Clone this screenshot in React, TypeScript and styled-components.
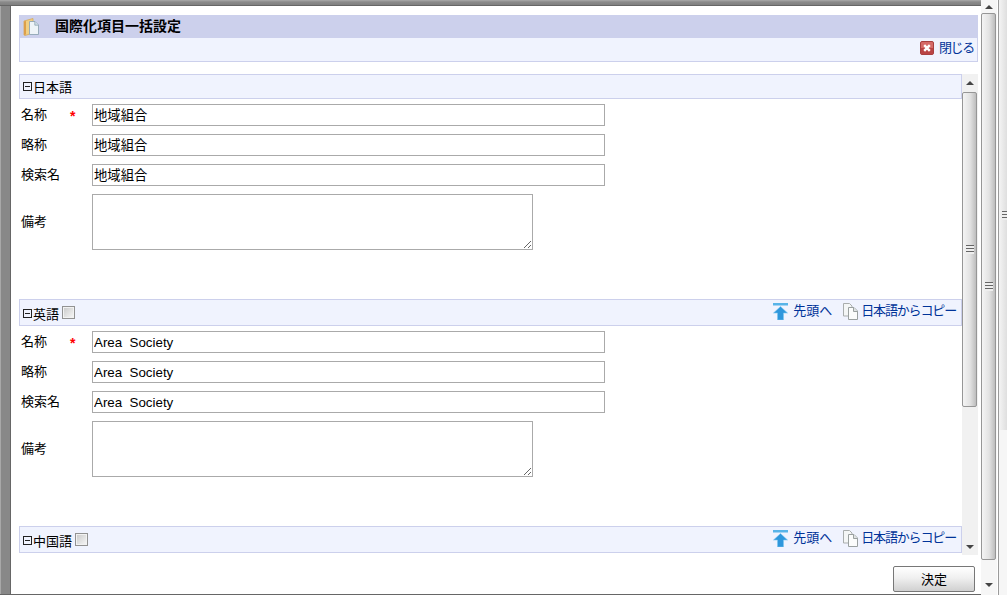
import { createGlobalStyle } from 'styled-components';
import styled from 'styled-components';

const GlobalStyle = createGlobalStyle`
  html, body { margin: 0; padding: 0; background: #fff; }
  body { font-family: "Liberation Sans", "Noto Sans CJK JP", sans-serif; font-size: 13px; color: #000; }
`;

const BLUE = '#003399';
const BAND = '#ccd0ec';
const PALE = '#f0f3fe';

const Screen = styled.div`
  display: flex;
  width: 1007px;
  height: 595px;
  overflow: hidden;
`;

const Page = styled.div`
  display: flex;
  flex-direction: column;
  width: 981px;
  flex: none;
  border-bottom: 1px solid #666;
  box-sizing: border-box;
`;

const TopEdge = styled.div`
  flex: none;
  height: 6px;
  box-sizing: border-box;
  background: linear-gradient(#aaa 0, #8a8a8a 2px, #808080 100%);
  border-bottom: 1px solid #666;
`;

const Middle = styled.div`
  display: flex;
  flex: 1;
  min-height: 0;
`;

const LeftEdge = styled.div`
  flex: none;
  width: 11px;
  box-sizing: border-box;
  background: #888;
  border-left: 1px solid #a8a8a8;
  border-right: 1px solid #666;
`;

const Dialog = styled.div`
  flex: 1;
  display: flex;
  flex-direction: column;
  min-width: 0;
  padding: 9px 3px 0 8px;
  background: #fff;
`;

const TitleBar = styled.div`
  display: flex;
  align-items: center;
  flex: none;
  height: 23px;
  padding-left: 4px;
  background: ${BAND};
`;

const Title = styled.h1`
  margin: -2px 0 0 16px;
  font-size: 14px;
  font-weight: bold;
  line-height: 20px;
`;

const CloseBar = styled.div`
  display: flex;
  align-items: center;
  justify-content: flex-end;
  flex: none;
  height: 24px;
  box-sizing: border-box;
  padding: 0 3px 3px 0;
  background: ${PALE};
  border: 1px solid ${BAND};
  border-top: none;
`;

const LinkItem = styled.a<{ $tight?: number; $gap?: number }>`
  display: inline-flex;
  align-items: center;
  gap: ${(p) => p.$gap ?? 5}px;
  color: ${BLUE};
  font-size: 13px;
  line-height: 16px;
  letter-spacing: ${(p) => p.$tight ?? 0}px;
  text-decoration: none;
  cursor: pointer;
`;

const ScrollArea = styled.div`
  display: flex;
  flex: none;
  height: 481px;
  margin-top: 12px;
`;

const FormList = styled.div`
  flex: 1;
  min-width: 0;
  overflow: hidden;
`;

const Section = styled.section`
  margin-bottom: 49px;
`;

const SectionHeader = styled.div<{ $tall?: boolean }>`
  display: flex;
  align-items: center;
  justify-content: space-between;
  height: ${(p) => (p.$tall ? 27 : 25)}px;
  box-sizing: border-box;
  padding: 0 5px 0 3px;
  background: ${PALE};
  border: 1px solid ${BAND};
`;

const SectionTitle = styled.div<{ $tall?: boolean }>`
  display: flex;
  align-items: center;
  padding-top: ${(p) => (p.$tall ? 2 : 0)}px;
  font-size: 13px;
`;

const Collapse = styled.span`
  position: relative;
  width: 9px;
  height: 9px;
  margin-right: 1px;
  box-sizing: border-box;
  border: 1px solid #222;

  &::after {
    content: '';
    position: absolute;
    left: 1px;
    right: 1px;
    top: 3px;
    height: 1px;
    background: #222;
  }
`;

const CheckBox = styled.span`
  flex: none;
  width: 13px;
  height: 13px;
  margin: -3px 0 0 3px;
  box-sizing: border-box;
  border: 1px solid #929292;
  box-shadow: inset 0 0 0 1px #f2f2f2;
  background: linear-gradient(135deg, #c8c8c8, #f8f8f8);
`;

const Actions = styled.div`
  display: flex;
  align-items: center;
  gap: 11px;
  margin-top: -3px;
`;

const Fields = styled.div`
  display: flex;
  flex-direction: column;
  gap: 8px;
  padding: 5px 0 0 2px;
`;

const Row = styled.div`
  display: flex;
  align-items: center;
`;

const Label = styled.label`
  flex: none;
  width: 49px;
  margin-top: -1px;
  font-size: 13px;
  line-height: 18px;
`;

const Mark = styled.span`
  flex: none;
  width: 22px;
  margin-top: 2px;
  color: #f00;
  font-size: 14px;
  font-weight: bold;
  line-height: 18px;
`;

const TextInput = styled.input<{ $cjk?: boolean }>`
  width: 513px;
  height: 22px;
  box-sizing: border-box;
  margin: 0;
  padding: 0 1px ${(p) => (p.$cjk ? 2 : 0)}px;
  border: 1px solid #aaa;
  border-radius: 0;
  outline: none;
  background: #fff;
  color: #000;
  font: 13.33px "Liberation Sans", "Noto Sans CJK JP", sans-serif;
`;

const Memo = styled.textarea`
  display: block;
  width: 441px;
  height: 56px;
  box-sizing: border-box;
  margin: 0;
  padding: 1px;
  border: 1px solid #aaa;
  border-radius: 0;
  outline: none;
  background: #fff;
  font: 13px "Liberation Sans", "Noto Sans CJK JP", sans-serif;
`;

const Footer = styled.div`
  display: flex;
  justify-content: flex-end;
  flex: none;
  margin-top: 11px;
  padding-right: 3px;
`;

const SubmitButton = styled.button`
  width: 82px;
  height: 26px;
  box-sizing: border-box;
  padding: 0 0 2px;
  border: 1px solid #777;
  border-radius: 2px;
  background: linear-gradient(#fff, #f0f0f0 45%, #d0d0d0);
  color: #000;
  font: 13px "Liberation Sans", "Noto Sans CJK JP", sans-serif;
`;

const Track = styled.div<{ $tinted?: boolean }>`
  display: flex;
  flex-direction: column;
  flex: none;
  width: 16px;
  box-sizing: border-box;
  background: ${(p) => (p.$tinted ? '#f1f1f1' : '#f6f6f6')};
  padding-right: 1px;
`;

const ArrowCell = styled.div<{ $h: number }>`
  display: flex;
  align-items: center;
  justify-content: center;
  flex: none;
  height: ${(p) => p.$h}px;
`;

const ArrowUp = styled.span`
  width: 0;
  height: 0;
  border-left: 4px solid transparent;
  border-right: 4px solid transparent;
  border-bottom: 4px solid #444;
`;

const ArrowDown = styled.span`
  width: 0;
  height: 0;
  border-left: 4px solid transparent;
  border-right: 4px solid transparent;
  border-top: 4px solid #444;
`;

const Thumb = styled.div<{ $h: number }>`
  display: flex;
  align-items: center;
  justify-content: center;
  flex: none;
  height: ${(p) => p.$h}px;
  box-sizing: border-box;
  border: 1px solid #969696;
  border-radius: 2px;
  background: linear-gradient(90deg, #f4f4f4, #e2e2e2 55%, #bdbdbd);
`;

const Grip = styled.span`
  width: 8px;
  height: 9px;
  background: repeating-linear-gradient(#666 0, #666 1px, #eee 1px, #eee 3px);
`;

const Spacer = styled.div`
  flex: 1;
`;

const EdgeTrack = styled.div`
  flex: none;
  width: 9px;
  margin-left: 1px;
  border-left: 1px solid #9a9a9a;
  background: #f6f6f6;
`;

const EdgeThumb = styled.div`
  display: flex;
  align-items: center;
  justify-content: flex-start;
  height: 430px;
  padding-left: 3px;
  background: linear-gradient(90deg, #f4f4f4, #dcdcdc);
`;

const FolderIcon = () => (
  <svg width="16" height="18" viewBox="0 0 16 18">
    <path d="M1 3 10 .5V15l-8 2.500-1-.5z" fill="#f0cf85" stroke="#d6a95a" strokeWidth=".8" />
    <path d="M1 3.500 3 3v13.500L1 17z" fill="#dd9f4a" />
    <path d="M6.500 3.500h5.500l3.500 3.500v9.500h-9z" fill="#eef4f8" stroke="#8fa6b4" strokeWidth=".9" />
    <path d="M11.800 3.500v3.700h3.700" fill="#cfdde6" stroke="#8fa6b4" strokeWidth=".8" />
  </svg>
);

const CloseIcon = () => (
  <svg width="14" height="14" viewBox="0 0 14 14">
    <rect x=".5" y=".5" width="13" height="13" rx="1.500" fill="#d56a68" stroke="#a83f3f" />
    <rect x="1" y="7" width="12" height="6" fill="#ba4444" />
    <path d="M4.200 4.200l5.600 5.600M9.800 4.200l-5.600 5.600" stroke="#fff" strokeWidth="2.400" />
  </svg>
);

const TopIcon = () => (
  <svg width="15" height="17" viewBox="0 0 15 17">
    <rect x="0" y="0" width="15" height="2.500" fill="#58b4e8" />
    <path d="M7.500 3.500 14.500 10H10.500V17H4.500V10H.5z" fill="#2f97dc" stroke="#7cc6ef" strokeWidth=".6" />
  </svg>
);

const CopyIcon = () => (
  <svg width="15" height="17" viewBox="0 0 15 17">
    <path d="M.5.5h6l2.500 2.500v10H.5z" fill="#f4f6f6" stroke="#a9adad" />
    <path d="M5.500 4.500h5.500l3.500 3.500v8.500h-9z" fill="#fbfcfc" stroke="#9aa0a0" />
    <path d="M10.500 4.500v4h4" fill="#dfe3e3" stroke="#9aa0a0" />
  </svg>
);

const ScrollBar = ({ top, thumb, bottom, tinted }: { top: number; thumb: number; bottom: number; tinted?: boolean }) => (
  <Track $tinted={tinted}>
    <ArrowCell $h={top}>
      <ArrowUp />
    </ArrowCell>
    <Thumb $h={thumb}>
      <Grip />
    </Thumb>
    <Spacer />
    <ArrowCell $h={bottom}>
      <ArrowDown />
    </ArrowCell>
  </Track>
);

const LangFields = ({ value, cjk }: { value: string; cjk?: boolean }) => (
  <Fields>
    <Row>
      <Label>名称</Label>
      <Mark>*</Mark>
      <TextInput $cjk={cjk} defaultValue={value} />
    </Row>
    <Row>
      <Label>略称</Label>
      <Mark />
      <TextInput $cjk={cjk} defaultValue={value} />
    </Row>
    <Row>
      <Label>検索名</Label>
      <Mark />
      <TextInput $cjk={cjk} defaultValue={value} />
    </Row>
    <Row>
      <Label>備考</Label>
      <Mark />
      <Memo />
    </Row>
  </Fields>
);

const LangActions = () => (
  <Actions>
    <LinkItem>
      <TopIcon />
      先頭へ
    </LinkItem>
    <LinkItem $tight={-1.15} $gap={3}>
      <CopyIcon />
      日本語からコピー
    </LinkItem>
  </Actions>
);

export default function App() {
  return (
    <Screen>
      <GlobalStyle />
      <Page>
        <TopEdge />
        <Middle>
          <LeftEdge />
          <Dialog>
            <TitleBar>
              <FolderIcon />
              <Title>国際化項目一括設定</Title>
            </TitleBar>
            <CloseBar>
              <LinkItem $tight={-1.3}>
                <CloseIcon />
                閉じる
              </LinkItem>
            </CloseBar>

            <ScrollArea>
              <FormList>
                {/* 日本語 */}
                <Section>
                  <SectionHeader>
                    <SectionTitle>
                      <Collapse />
                      日本語
                    </SectionTitle>
                  </SectionHeader>
                  <LangFields value="地域組合" cjk />
                </Section>

                {/* 英語 */}
                <Section>
                  <SectionHeader $tall>
                    <SectionTitle $tall>
                      <Collapse />
                      英語
                      <CheckBox />
                    </SectionTitle>
                    <LangActions />
                  </SectionHeader>
                  <LangFields value="Area  Society" />
                </Section>

                {/* 中国語 */}
                <Section>
                  <SectionHeader $tall>
                    <SectionTitle $tall>
                      <Collapse />
                      中国語
                      <CheckBox />
                    </SectionTitle>
                    <LangActions />
                  </SectionHeader>
                </Section>
              </FormList>
              <ScrollBar top={18} thumb={315} bottom={16} tinted />
            </ScrollArea>

            <Footer>
              <SubmitButton>決定</SubmitButton>
            </Footer>
          </Dialog>
        </Middle>
      </Page>
      <ScrollBar top={13} thumb={547} bottom={20} />
      <EdgeTrack>
        <EdgeThumb>
          <Grip />
        </EdgeThumb>
      </EdgeTrack>
    </Screen>
  );
}
